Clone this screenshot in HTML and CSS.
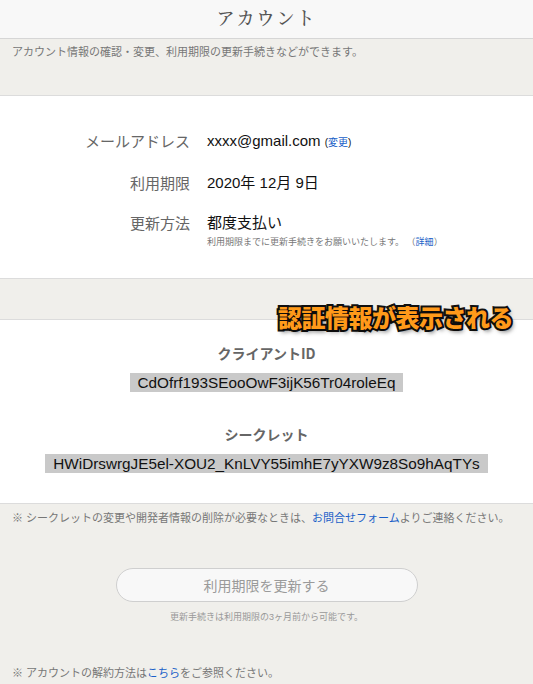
FILE: index.html
```html
<!doctype html>
<html lang="ja">
<head>
  <meta charset="utf-8">
  <title>アカウント</title>
  <link rel="stylesheet" href="styles.css">
</head>
<body>
  <header class="top">
    <h1>アカウント</h1>
  </header>

  <div class="band band-desc">
    <p>アカウント情報の確認・変更、利用期限の更新手続きなどができます。</p>
  </div>

  <section class="panel info">
    <div class="row">
      <div class="label">メールアドレス</div>
      <div class="value">xxxx@gmail.com <small>(<a href="#">変更</a>)</small></div>
    </div>
    <div class="row">
      <div class="label">利用期限</div>
      <div class="value">2020年 12月 9日</div>
    </div>
    <div class="row">
      <div class="label">更新方法</div>
      <div class="value">
        都度支払い
        <div class="note">利用期限までに更新手続きをお願いいたします。 （<a href="#">詳細</a>）</div>
      </div>
    </div>
  </section>

  <div class="band band-mid">
    <span class="callout">認証情報が表示される</span>
  </div>

  <section class="panel creds">
    <h3>クライアントID</h3>
    <p><span class="key">CdOfrf193SEooOwF3ijK56Tr04roleEq</span></p>
    <h3>シークレット</h3>
    <p><span class="key">HWiDrswrgJE5el-XOU2_KnLVY55imhE7yYXW9z8So9hAqTYs</span></p>
  </section>

  <footer class="band band-foot">
    <p class="remark">※ シークレットの変更や開発者情報の削除が必要なときは、<a href="#">お問合せフォーム</a>よりご連絡ください。</p>
    <div class="renew">
      <button class="renew-btn" type="button">利用期限を更新する</button>
      <p class="renew-note">更新手続きは利用期限の3ヶ月前から可能です。</p>
    </div>
    <p class="remark">※ アカウントの解約方法は<a href="#">こちら</a>をご参照ください。</p>
  </footer>
</body>
</html>
```

FILE: styles.css
```css
body {
  margin: 0;
  font-family: "Liberation Sans", "Noto Sans CJK JP", sans-serif;
  background: #f0efeb;
  color: #222;
}

a {
  color: #1a5fc8;
  text-decoration: none;
}

p {
  margin: 0;
}

.top {
  background: #f8f8f8;
  border-bottom: 1px solid #d6d6d6;
  height: 39px;
  padding-bottom: 4px;
  box-sizing: border-box;
  display: flex;
  align-items: center;
  justify-content: center;
}

.top h1 {
  margin: 0;
  font-family: "Noto Serif CJK JP", "Noto Sans CJK JP", serif;
  font-size: 18px;
  font-weight: 500;
  letter-spacing: 2px;
  color: #555;
}

.band {
  background: #f0efeb;
}

.band-desc {
  height: 57px;
  padding: 4px 12px 0;
  box-sizing: border-box;
  border-bottom: 1px solid #dcdcdc;
  font-size: 11px;
  color: #777;
}

.panel {
  background: #fff;
}

.info {
  padding: 33px 0 30px;
  border-bottom: 1px solid #dcdcdc;
}

.row {
  display: flex;
  align-items: flex-start;
  margin-bottom: 17px;
}

.row:last-child {
  margin-bottom: 0;
}

.label {
  width: 207px;
  text-align: right;
  font-size: 15px;
  color: #666;
  padding-right: 17px;
  box-sizing: border-box;
  font-family: "Noto Sans CJK JP", sans-serif;
  line-height: 23px;
}

.value {
  font-size: 15px;
  line-height: 23px;
  color: #111;
}

.value small {
  font-size: 10px;
}

.note {
  font-size: 9px;
  color: #777;
  line-height: 12px;
  margin-top: 2px;
}

.band-mid {
  height: 40px;
  border-bottom: 1px solid #dcdcdc;
  position: relative;
}

.callout {
  position: absolute;
  right: 20px;
  top: 23px;
  font-family: "Noto Sans CJK JP", sans-serif;
  font-size: 24px;
  font-weight: 900;
  color: #ff9a1a;
  -webkit-text-stroke: 4px #111;
  paint-order: stroke fill;
  text-shadow: 2px 3px 4px rgba(0, 0, 0, .5);
  letter-spacing: -0.5px;
  line-height: 30px;
  z-index: 1;
}

.creds {
  text-align: center;
  padding: 23px 0 30px;
  border-bottom: 1px solid #dcdcdc;
}

.creds h3 {
  margin: 0 0 10px;
  font-family: "Noto Sans CJK JP", sans-serif;
  font-size: 14px;
  font-weight: 700;
  color: #666;
  line-height: 20px;
}

.creds p {
  margin-bottom: 32px;
  line-height: 19px;
}

.creds p:last-child {
  margin-bottom: 0;
}

.key {
  background: #c9c9c9;
  font-size: 15.3px;
  color: #111;
  padding: 1px 8px;
}

.band-foot {
  padding: 6px 12px 8px;
}

.remark {
  font-size: 11px;
  color: #777;
  line-height: 16px;
}

.renew {
  text-align: center;
  padding: 42px 0 42px;
}

.renew-btn {
  width: 302px;
  height: 34px;
  border: 1px solid #cfcfcf;
  border-radius: 17px;
  background: #f8f8f8;
  font-family: "Noto Sans CJK JP", sans-serif;
  font-size: 14px;
  color: #9a9a9a;
}

.renew-note {
  margin-top: 8px;
  font-size: 9px;
  color: #999;
}
```
